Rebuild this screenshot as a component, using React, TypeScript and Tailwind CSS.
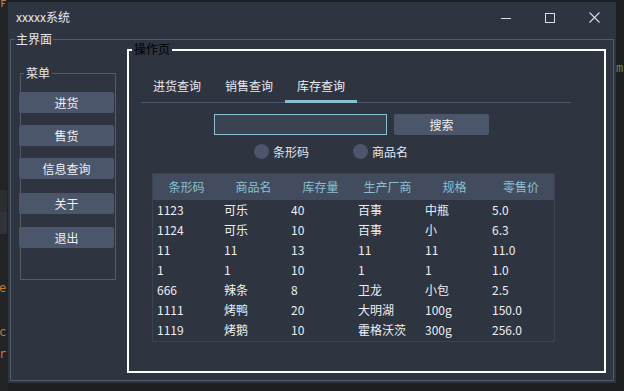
import React from "react";

const headers = ["条形码", "商品名", "库存量", "生产厂商", "规格", "零售价"];
const rows = [
  ["1123", "可乐", "40", "百事", "中瓶", "5.0"],
  ["1124", "可乐", "10", "百事", "小", "6.3"],
  ["11", "11", "13", "11", "11", "11.0"],
  ["1", "1", "10", "1", "1", "1.0"],
  ["666", "辣条", "8", "卫龙", "小包", "2.5"],
  ["1111", "烤鸭", "20", "大明湖", "100g", "150.0"],
  ["1119", "烤鹅", "10", "霍格沃茨", "300g", "256.0"],
];

const menu = [
  { label: "进货", cls: "mt-[18px]" },
  { label: "售货", cls: "mt-[12px]" },
  { label: "信息查询", cls: "mt-[12px]" },
  { label: "关于", cls: "mt-[14px]" },
  { label: "退出", cls: "mt-[13px]" },
];

const tabs = ["进货查询", "销售查询", "库存查询"];

export default function App() {
  return (
    <div className="relative w-[624px] h-[391px] overflow-hidden bg-[#1e1f22] pl-[8px] pt-[2px] font-['Noto_Sans_CJK_SC','Noto_Sans',sans-serif] text-[12px] leading-[14px]">
      {/* editor behind the window */}
      <div className="absolute left-0 top-0 w-[8px] h-full bg-[#222326]" />
      <div className="absolute left-0 top-[190px] w-[7px] h-[22px] bg-[#2b2d30]" />
      <div className="absolute left-0 top-[212px] w-[7px] h-[22px] bg-[#313338]" />
      <svg className="absolute left-[1px] top-0" width="6" height="7" viewBox="0 0 6 7">
        <path d="M1 7V0.5H5M1 3.5H4" fill="none" stroke="#cc7832" strokeWidth="1.2" />
      </svg>
      <span className="absolute left-[-1px] top-[281px] text-[#cc7832] font-['DejaVu_Sans_Mono',monospace] text-[12px]">e</span>
      <span className="absolute left-[-1px] top-[325px] text-[#cc7832] font-['DejaVu_Sans_Mono',monospace] text-[12px]">c</span>
      <span className="absolute left-[-1px] top-[347px] text-[#cc7832] font-['DejaVu_Sans_Mono',monospace] text-[12px]">r</span>
      <span className="absolute left-[616px] top-[61px] text-[#6a8759] font-['DejaVu_Sans_Mono',monospace] text-[12px]">m</span>

      {/* window */}
      <div className="relative w-[608px] h-[381px] bg-[#2e3440] flex flex-col text-[#e5e9f0]">
        {/* title bar */}
        <div className="h-[29px] flex items-center">
          <span className="pl-[8px]">xxxxx系统</span>
          <div className="ml-auto flex h-full">
            <div className="w-[44px] h-full flex items-center justify-center pt-[2px]">
              <svg width="10" height="10" viewBox="0 0 10 10">
                <line x1="0" y1="5.5" x2="10" y2="5.5" stroke="#d8dee9" strokeWidth="1" />
              </svg>
            </div>
            <div className="w-[44px] h-full flex items-center justify-center pt-[2px]">
              <svg width="10" height="10" viewBox="0 0 10 10">
                <rect x="0.5" y="0.5" width="9" height="9" fill="none" stroke="#d8dee9" strokeWidth="1" />
              </svg>
            </div>
            <div className="w-[44px] h-full flex items-center justify-center pt-[2px]">
              <svg width="11" height="11" viewBox="0 0 11 11">
                <line x1="0.5" y1="0.5" x2="10.5" y2="10.5" stroke="#d8dee9" strokeWidth="1.1" />
                <line x1="10.5" y1="0.5" x2="0.5" y2="10.5" stroke="#d8dee9" strokeWidth="1.1" />
              </svg>
            </div>
          </div>
        </div>

        {/* main group */}
        <div className="relative ml-[2px] mt-[8px] w-[604px] h-[342px] border border-[#545b69] flex items-start">
          <span className="absolute left-[4px] -top-[8px] px-[1px] bg-[#2e3440] text-[#e5e9f0]">主界面</span>

          {/* menu group */}
          <div className="relative ml-[9px] mt-[33px] w-[96px] h-[207px] border border-[#545b69] flex flex-col">
            <span className="absolute left-[3px] -top-[8px] px-[2px] bg-[#2e3440] text-[#e5e9f0]">菜单</span>
            {menu.map((m) => (
              <div
                key={m.label}
                className={`${m.cls} -ml-[2px] w-[95px] h-[21px] rounded-[2px] bg-[#4c566a] flex items-center justify-center text-[#eceff4]`}
              >
                {m.label}
              </div>
            ))}
          </div>

          {/* operation group */}
          <div className="relative ml-[11px] mt-[9px] w-[479px] h-[324px] border-2 border-white flex flex-col">
            <span className="absolute left-[3px] -top-[9px] px-[2px] bg-[#2e3440] text-black">操作页</span>

            {/* tabs */}
            <div className="ml-[12px] mt-[19px] w-[430px] flex border-b border-[#4c566a]">
              {tabs.map((t, i) => (
                <div
                  key={t}
                  className={
                    i === 2
                      ? "w-[72px] h-[33px] -mb-px pt-[2px] flex items-center justify-center border-b-[3px] border-[#88c0d0] text-[#eceff4]"
                      : "w-[72px] h-[33px] -mb-px pt-[2px] flex items-center justify-center border-b-[3px] border-transparent text-[#e5e9f0]"
                  }
                >
                  {t}
                </div>
              ))}
            </div>

            {/* search row */}
            <div className="ml-[85px] mt-[11px] flex gap-[7px]">
              <div className="w-[173px] h-[21px] border border-[#88c0d0] bg-[#3b4252]" />
              <div className="w-[95px] h-[21px] rounded-[2px] bg-[#4c566a] flex items-center justify-center text-[#eceff4]">
                搜索
              </div>
            </div>

            {/* radio row */}
            <div className="ml-[125px] mt-[9px] flex items-center h-[15px]">
              <div className="w-[15px] h-[15px] rounded-full bg-[#4c566a]" />
              <span className="ml-[4px]">条形码</span>
              <div className="ml-[44px] w-[15px] h-[15px] rounded-full bg-[#4c566a]" />
              <span className="ml-[4px]">商品名</span>
            </div>

            {/* table */}
            <div className="ml-[23px] mt-[14px] w-[403px] border border-[#3b4252] pb-[1px]">
              <div className="grid grid-cols-[67px_67px_67px_67px_67px_66px] h-[26px] bg-[#434c5e] text-[#88c0d0]">
                {headers.map((h) => (
                  <div key={h} className="flex items-center justify-center">
                    {h}
                  </div>
                ))}
              </div>
              {rows.map((r, ri) => (
                <div key={ri} className="grid grid-cols-[67px_67px_67px_67px_67px_66px] h-[20px] text-[#eceff4]">
                  {r.map((c, ci) => (
                    <div key={ci} className="flex items-center pl-[4px]">
                      {c}
                    </div>
                  ))}
                </div>
              ))}
            </div>
          </div>
        </div>
      </div>
    </div>
  );
}
